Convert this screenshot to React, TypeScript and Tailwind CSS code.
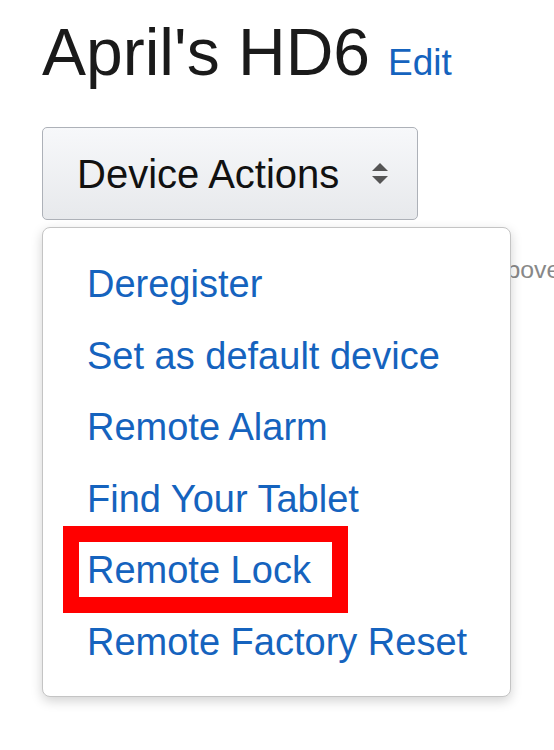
import React from 'react'

const actions = [
  'Deregister',
  'Set as default device',
  'Remote Alarm',
  'Find Your Tablet',
  'Remote Lock',
  'Remote Factory Reset',
]

function SortArrows() {
  return (
    <svg width="18" height="21" viewBox="0 0 18 21" className="ml-[32px] shrink-0">
      <path d="M1 8 L9 0 L17 8 Z" fill="#555" />
      <path d="M1 13 L9 21 L17 13 Z" fill="#555" />
    </svg>
  )
}

export default function App() {
  return (
    <div
      className="min-h-[750px] bg-white pl-[42px] pt-[19px] overflow-hidden"
      style={{ fontFamily: '"Liberation Sans", Arial, sans-serif' }}
    >
      <div className="flex items-baseline">
        <h1 className="text-[66px] leading-none text-[#1a1a1a] font-normal">April's HD6</h1>
        <a className="ml-[18px] text-[37px] leading-none text-[#1563be] cursor-pointer">Edit</a>
      </div>

      <div className="relative mt-[42px] w-[376px]">
        <button className="flex items-center w-[376px] h-[93px] pl-[34px] rounded-[5px] border border-[#adb1b8] bg-gradient-to-b from-[#f7f8fa] to-[#e7e9ec] text-[40px] leading-none text-[#111]">
          Device Actions
          <SortArrows />
        </button>

        <p className="mt-[35px] whitespace-nowrap text-[24.8px] leading-[30px] text-[#888]">
          Manage this device via the actions listed above.
        </p>

        {/* open dropdown menu */}
        <div className="absolute left-0 top-[100px] w-[469px] rounded-[8px] border border-[#c4c4c4] bg-white pt-[21px] pb-[17px] shadow-[0_4px_12px_rgba(0,0,0,0.18)]">
          {actions.map(a => (
            <div key={a} className="relative pl-[44px] text-[38px] leading-[71.6px] whitespace-nowrap">
              {a === 'Remote Lock' && (
                <div className="absolute left-[20px] -top-[9px] w-[285px] h-[87px] border-[16px] border-[#ff0000]" />
              )}
              <a className="relative text-[#1563be] cursor-pointer">{a}</a>
            </div>
          ))}
        </div>
      </div>
    </div>
  )
}
